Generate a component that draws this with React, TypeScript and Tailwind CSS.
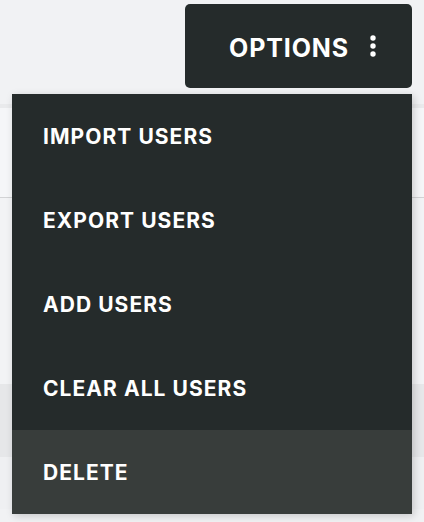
import React from 'react';

const items = ['IMPORT USERS', 'EXPORT USERS', 'ADD USERS', 'CLEAR ALL USERS', 'DELETE'];

function DotsIcon() {
  return (
    <svg width="6" height="22" viewBox="0 0 6 22" fill="#ffffff">
      <circle cx="3" cy="3" r="2.7" />
      <circle cx="3" cy="11" r="2.7" />
      <circle cx="3" cy="19" r="2.7" />
    </svg>
  );
}

export default function App() {
  return (
    <div
      className="relative h-[522px] w-full overflow-hidden bg-[#f1f2f4]"
      style={{ fontFamily: 'Inter, "Open Sans", sans-serif' }}
    >
      <div className="flex justify-end pt-1 pr-3">
        <div className="relative">
          <button className="flex h-[84px] w-[227px] items-center justify-end gap-[21px] rounded-[5px] bg-[#252b2b] pr-[36px] text-white">
            <span className="pt-[5px] text-[25px] font-bold tracking-[0.035em]">OPTIONS</span>
            <DotsIcon />
          </button>

          <div className="absolute right-0 top-[90px] z-10 w-[400px] bg-[#252b2b] shadow-[2px_2px_8px_rgba(0,0,0,0.18)]">
            {items.map((label) => (
              <div
                key={label}
                className={
                  label === 'DELETE'
                    ? 'flex h-[84px] items-center bg-[#383d3b] pl-[31px] pt-[2px] text-[21px] font-bold tracking-[0.05em] text-white'
                    : 'flex h-[84px] items-center pl-[31px] pt-[2px] text-[21px] font-bold tracking-[0.05em] text-white'
                }
              >
                {label}
              </div>
            ))}
          </div>
        </div>
      </div>

      {/* page content behind the menu */}
      <div className="mt-[16px] h-[4px] bg-[#e9eaec]" />
      <div className="h-[89px] bg-[#f5f6f8]" />
      <div className="h-px bg-[#d2d3d5]" />
      <div className="h-[186px] bg-[#f2f3f5]" />
      <div className="h-[73px] bg-[#e6e7e9]" />
      <div className="h-[52px] bg-[#eff0f2]" />
    </div>
  );
}
